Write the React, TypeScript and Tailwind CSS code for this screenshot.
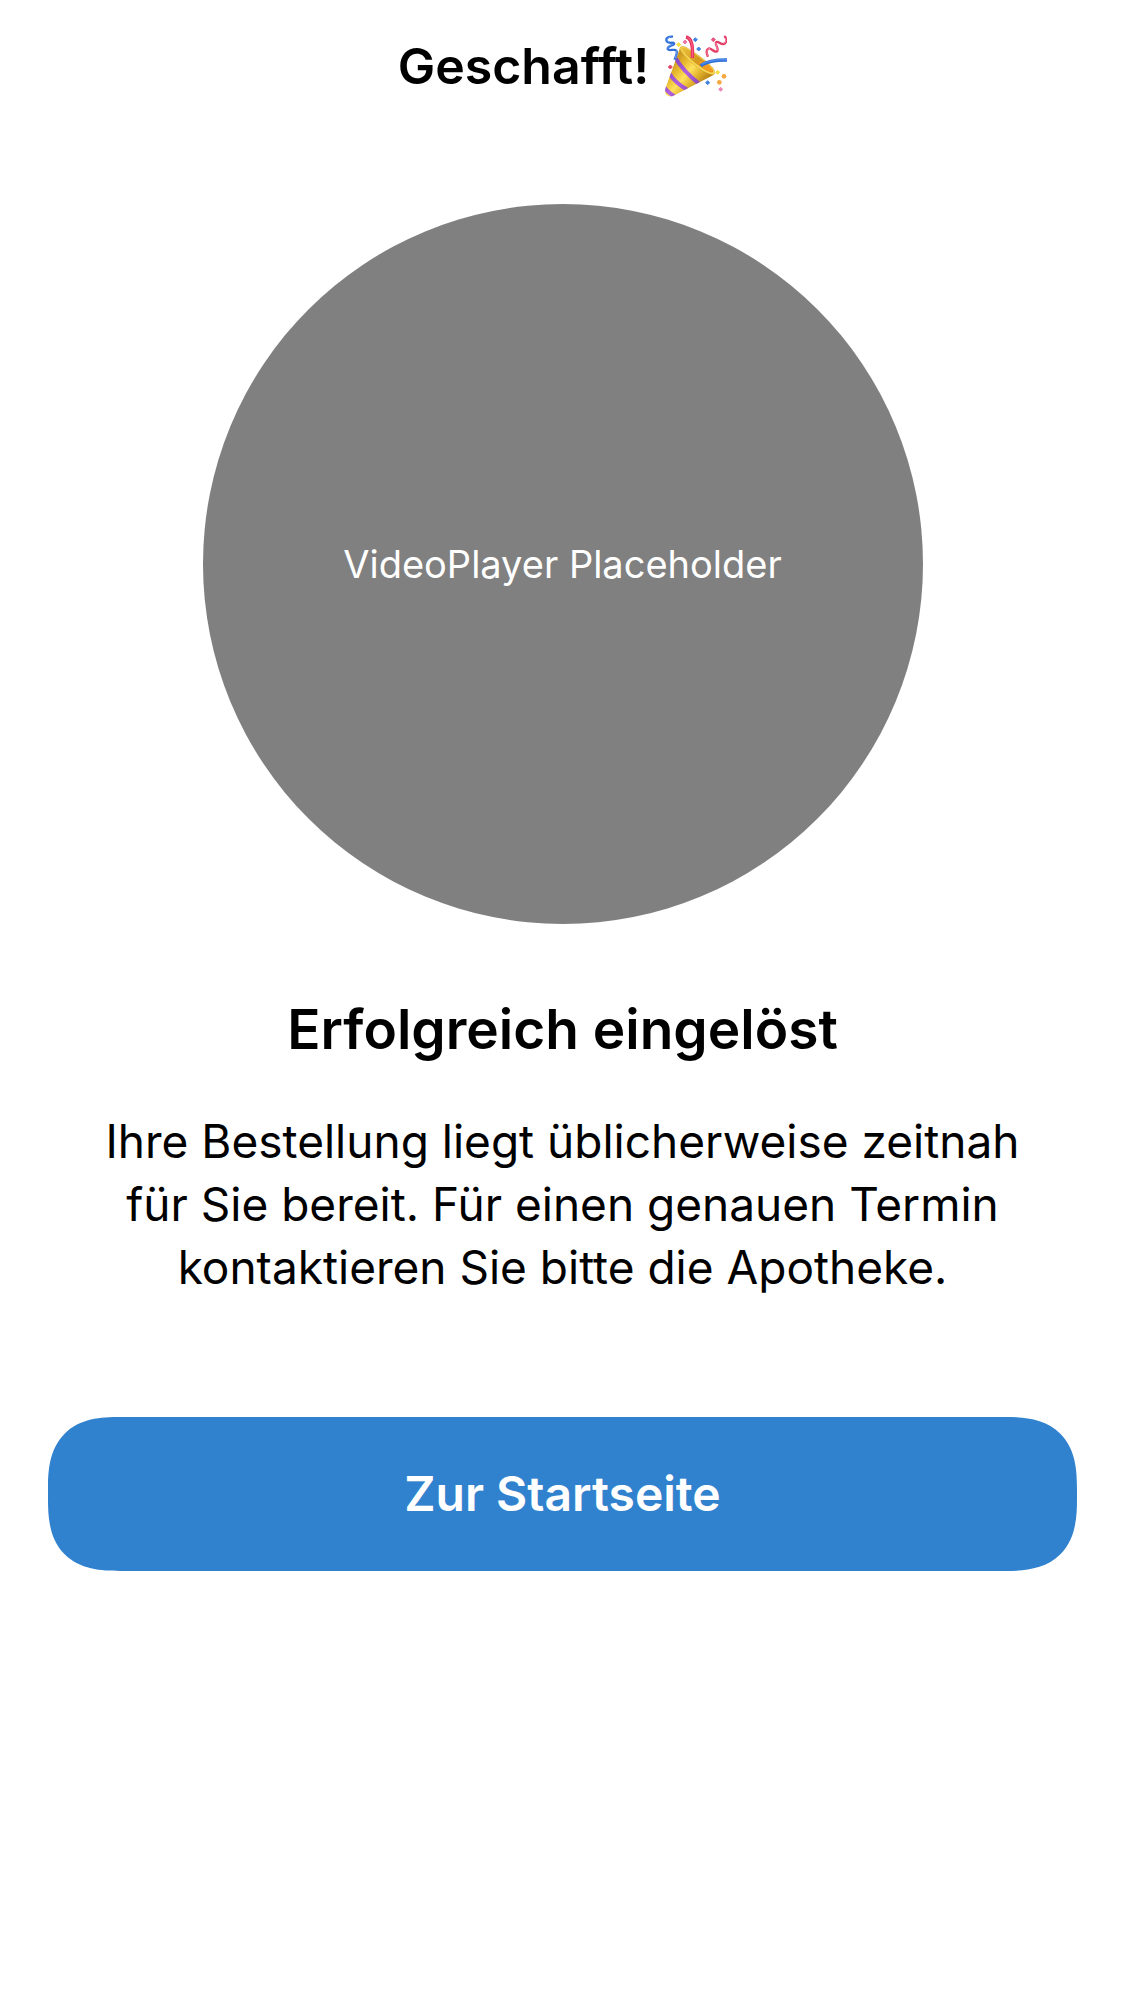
function PartyPopper() {
  return (
    <svg viewBox="24 22 186 186" role="img" aria-label="Konfetti" className="h-[62px] w-[62px]">
      <defs>
        <linearGradient id="cone" x1="44" y1="110" x2="124" y2="180" gradientUnits="userSpaceOnUse">
          <stop offset="0" stopColor="#cf9a22" />
          <stop offset="0.25" stopColor="#e9bb30" />
          <stop offset="0.5" stopColor="#ffe25c" />
          <stop offset="0.75" stopColor="#e3b42d" />
          <stop offset="1" stopColor="#bd8718" />
        </linearGradient>
        <linearGradient id="mouth" x1="80" y1="65" x2="165" y2="135" gradientUnits="userSpaceOnUse">
          <stop offset="0" stopColor="#e9bd38" />
          <stop offset="0.45" stopColor="#d39a20" />
          <stop offset="1" stopColor="#e88d15" />
        </linearGradient>
        <linearGradient id="band" x1="40" y1="110" x2="124" y2="180" gradientUnits="userSpaceOnUse">
          <stop offset="0" stopColor="#8446bd" />
          <stop offset="0.5" stopColor="#b261e0" />
          <stop offset="1" stopColor="#8745b5" />
        </linearGradient>
        <clipPath id="coneClip">
          <path d="M70 58 L25 183 Q22 202 36 206 Q44 208 52 203 L168 143 Q176 138 170 130 Q128 118 70 58 Z" />
        </clipPath>
      </defs>
      <g clipPath="url(#coneClip)">
        <path d="M20 50 H180 V210 H20 Z" fill="url(#cone)" />
        <g fill="none" stroke="url(#band)" strokeWidth="12">
          <path d="M56 92 Q78 130 128 170" />
          <path d="M36 136 Q54 166 94 188" />
          <path d="M20 176 Q32 194 58 210" />
        </g>
      </g>
      <path
        d="M70 58 Q77 49 107 71 Q149 99 168 121 Q178 136 170 141 Q157 143 124 122 Q91 98 73 72 Q66 62 70 58 Z"
        fill="#f5d552"
        stroke="#c08a1c"
        strokeWidth="1"
      />
      <path
        d="M75 60 Q84 57 111 77 Q147 102 163 121 Q171 131 167 134 Q156 136 128 116 Q96 93 77 69 Q72 62 75 60 Z"
        fill="url(#mouth)"
      />
      <path d="M124 104 Q140 97 154 111 Q168 124 165 132 Q156 132 143 124 Z" fill="#f39c20" />
      <path d="M87 28 C106 32 108 58 106 91" fill="none" stroke="#e5315b" strokeWidth="10" />
      <path d="M91 29 C107 36 108 62 106 90" fill="none" stroke="#f85c82" strokeWidth="4" />
      <path d="M131 114 Q158 96 210 97" fill="none" stroke="#2f6fd4" strokeWidth="10" />
      <path d="M134 110 Q162 94 210 96" fill="none" stroke="#558fee" strokeWidth="4" />
      <g fill="none" strokeLinejoin="round">
        <path
          d="M48 27 C29 25 23 37 32 43 C40 48 49 43 51 47 C54 53 30 54 32 64 C36 72 53 62 58 69 C63 75 56 84 53 96"
          stroke="#3270d8"
          strokeWidth="7"
        />
        <path d="M40 27 C27 34 29 40 36 42 M48 49 C35 55 31 59 33 64 M57 69 C61 76 56 84 54 92" stroke="#6aa2f4" strokeWidth="3" />
        <path
          d="M202 25 C211 33 209 47 200 49 C191 51 183 39 178 43 C171 50 188 63 180 71 C172 77 161 58 154 63 C147 68 149 79 153 87"
          stroke="#e23c65"
          strokeWidth="7"
        />
        <path d="M206 32 C208 42 204 47 199 47 M177 45 C175 53 184 63 180 69 M159 62 C148 65 149 76 152 84" stroke="#ff8aa6" strokeWidth="3" />
      </g>
      <g strokeLinejoin="round" strokeWidth="3">
        <path d="M65 45 l6 6 l-6 6 l-6 -6 Z" fill="#f7e03a" stroke="#f7e03a" />
        <path d="M84 37 l6 6 l-6 6 l-6 -6 Z" fill="#ee78a5" stroke="#ee78a5" />
        <path d="M115 30 l6 6 l-6 6 l-6 -6 Z" fill="#3f83e0" stroke="#3f83e0" />
        <path d="M125 58 l6 6 l-6 6 l-6 -6 Z" fill="#3f83e0" stroke="#3f83e0" />
        <path d="M169 30 l6 6 l-6 6 l-6 -6 Z" fill="#e8517e" stroke="#e8517e" />
        <path d="M40 112 l6 6 l-6 6 l-6 -6 Z" fill="#e1456a" stroke="#e1456a" />
        <path d="M182 128 l6 6 l-6 6 l-6 -6 Z" fill="#f6df40" stroke="#f6df40" />
        <path d="M152 159 l6 6 l-6 6 l-6 -6 Z" fill="#3f83e0" stroke="#3f83e0" />
        <path d="M191 179 l6 6 l-6 6 l-6 -6 Z" fill="#ee87b8" stroke="#ee87b8" />
      </g>
      <circle cx="201" cy="146" r="7" fill="#f5a83d" />
      <circle cx="187" cy="164" r="7" fill="#f5a83d" />
    </svg>
  );
}

export default function App() {
  return (
    <main className="flex min-h-screen flex-col items-center bg-white px-12 font-['Inter',sans-serif] text-black">
      <header className="flex h-[132px] items-center gap-4">
        <h1 className="text-[50px] font-semibold">Geschafft!</h1>
        <PartyPopper />
      </header>
      <div className="mt-[72px] flex aspect-square w-[720px] max-w-full items-center justify-center rounded-full bg-[#808080] text-[38px] text-white">
        VideoPlayer Placeholder
      </div>
      <h2 className="mt-[72px] text-[55px] leading-[66px] font-semibold">Erfolgreich eingelöst</h2>
      <p className="mt-12 max-w-[930px] text-center text-[46px] leading-[63px]">
        Ihre Bestellung liegt üblicherweise zeitnah für Sie bereit. Für einen genauen Termin
        kontaktieren Sie bitte die Apotheke.
      </p>
      <button
        type="button"
        className="mt-[118px] h-[154px] w-full rounded-[48px] bg-[#3182ce] text-[48px] font-semibold text-white supports-[corner-shape:squircle]:rounded-[72px] supports-[corner-shape:squircle]:[corner-shape:superellipse(1.4)]"
      >
        Zur Startseite
      </button>
    </main>
  );
}
